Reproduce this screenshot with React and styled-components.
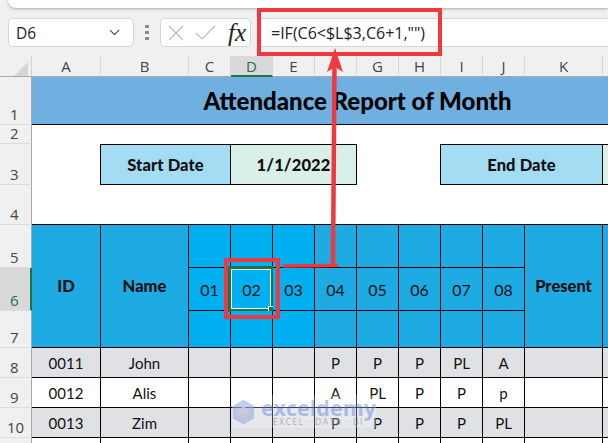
import styled, { createGlobalStyle } from "styled-components";
import { ChevronDown } from "lucide-react";

const columns = ["A", "B", "C", "D", "E", "F", "G", "H", "I", "J", "K", ""];
const days = ["01", "02", "03", "04", "05", "06", "07", "08"];
const rowLabels = ["1", "2", "3", "4", "5", "6", "7", "8", "9", "10", ""];
const students = [
  { id: "0011", name: "John", marks: ["", "", "", "P", "P", "P", "PL", "A"] },
  { id: "0012", name: "Alis", marks: ["", "", "", "A", "PL", "P", "P", "p"] },
  { id: "0013", name: "Zim", marks: ["", "", "", "P", "P", "P", "P", "PL"] },
];

const App = () => {
  return (
    <Page>
      <GlobalStyle />
      <TopPanel />
      <FormulaRow>
        <NameBox>
          D6
          <ChevronDown size={17} strokeWidth={1.5} color="#444" />
        </NameBox>
        <Grip>
          <i />
          <i />
          <i />
        </Grip>
        <FxBox>
          <svg width="16" height="16" viewBox="0 0 16 16">
            <path d="M1 1L15 15M15 1L1 15" stroke="#bdbdbd" strokeWidth="1.2" fill="none" />
          </svg>
          <svg width="21" height="15" viewBox="0 0 21 15">
            <path d="M1 8L7 14L20 1" stroke="#bdbdbd" strokeWidth="1.2" fill="none" />
          </svg>
          <FxLabel>fx</FxLabel>
        </FxBox>
        <FormulaInput>{'=IF(C6<$L$3,C6+1,"")'}</FormulaInput>
      </FormulaRow>

      <Sheet>
        <Corner>
          <svg width="14" height="14" viewBox="0 0 14 14">
            <path d="M14 0V14H0Z" fill="#d6d6d6" />
          </svg>
        </Corner>
        {columns.map((c, i) => (
          <ColHead key={i} $col={i + 2} $active={c === "D"}>{c}</ColHead>
        ))}
        {rowLabels.map((r, i) => (
          <RowHead key={i} $row={i + 2} $wide={r === "10"} $active={r === "6"}>{r}</RowHead>
        ))}

        <Title>Attendance Report of Month</Title>

        <WhiteBand />
        <DateCell $col="3 / span 2" $bg="#a4dcf3">Start Date</DateCell>
        <DateCell $col="5 / span 3" $bg="#d9f0e8" $noLeft>1/1/2022</DateCell>
        <DateCell $col="10 / span 3" $bg="#a4dcf3">End Date</DateCell>
        <DateCell $col="13" $bg="#d9f0e8" $noLeft />

        <Cell $col="2" $row="6 / span 3" $bg="#1eabe3" $bold>ID</Cell>
        <Cell $col="3" $row="6 / span 3" $bg="#1eabe3" $bold>Name</Cell>
        {days.map((d, i) => {
          const bg = i < 3 ? "#00b0f0" : "#1eabe3";
          return [
            <Cell key={d + "a"} $col={i + 4} $row="6" $bg={bg} />,
            <Cell key={d + "b"} $col={i + 4} $row="7" $bg={bg} $day>
              {d}
              {d === "02" && <Selection />}
            </Cell>,
            <Cell key={d + "c"} $col={i + 4} $row="8" $bg={bg} />,
          ];
        })}
        <Cell $col="12" $row="6 / span 3" $bg="#1eabe3" $bold>Present</Cell>
        <Cell $col="13" $row="6 / span 3" $bg="#1eabe3" />

        {students.map((s, r) => {
          const bg = r % 2 === 0 ? "#dfe1e4" : "#fff";
          return [
            <Cell key={s.id} $col="2" $row={r + 9} $bg={bg}>{s.id}</Cell>,
            <Cell key={s.name} $col="3" $row={r + 9} $bg={bg}>{s.name}</Cell>,
            ...s.marks.map((m, i) => (
              <Cell key={s.id + i} $col={i + 4} $row={r + 9} $bg={bg}>{m}</Cell>
            )),
            <Cell key={s.id + "k"} $col="12" $row={r + 9} $bg={bg} />,
            <Cell key={s.id + "l"} $col="13" $row={r + 9} $bg={bg} />,
          ];
        })}
        {columns.map((c, i) => (
          <Cell key={i + "-11"} $col={i + 2} $row="12" $bg="#fff" />
        ))}
      </Sheet>

      <FormulaFrame />
      <CellFrame />
      <Arrow width="70" height="225" viewBox="0 0 70 225">
        <path d="M0 218L55 217.5" stroke="#f0393f" strokeWidth="3.5" fill="none" />
        <path d="M50 219L51.5 15" stroke="#f0393f" strokeWidth="4.5" fill="none" />
        <path d="M52 0L60 24L52 19L44 24Z" fill="#f0393f" />
      </Arrow>

      <Watermark>
        <svg width="28" height="32" viewBox="0 0 28 32">
          <path d="M14 1L27 8.5V23.5L14 31L1 23.5V8.5Z" fill="#8fa6e0" opacity="0.55" />
          <path d="M14 9.5L20.5 13V20L14 24L7.5 20V13Z" fill="#c9ccd6" />
          <path d="M14 17L27 23.5L14 31L1 23.5Z" fill="#b9c2d4" opacity="0.5" />
        </svg>
        <WatermarkText>
          <b>exceldemy</b>
          <span>EXCEL · DATA · BI</span>
        </WatermarkText>
      </Watermark>
    </Page>
  );
};

const GlobalStyle = createGlobalStyle`
  html, body {
    margin: 0;
    padding: 0;
    overflow: hidden;
    background: #f0f0f0;
  }
`;

const Page = styled.div`
  position: relative;
  width: 608px;
  height: 443px;
  overflow: hidden;
  background: #f0f0f0;
  font-family: "Open Sans", "Liberation Sans", sans-serif;
`;

const TopPanel = styled.div`
  height: 8px;
  margin-left: 8px;
  background: #fff;
  border-bottom-left-radius: 8px;
  box-shadow: 0 1px 3px rgba(0, 0, 0, 0.3);
`;

const FormulaRow = styled.div`
  height: 48px;
  display: flex;
  align-items: flex-start;
  padding: 10px 0 0 8px;
  box-sizing: border-box;
`;

const NameBox = styled.div`
  width: 126px;
  height: 29px;
  box-sizing: border-box;
  padding: 0 10px 0 7px;
  display: flex;
  align-items: center;
  justify-content: space-between;
  background: #fff;
  border: 1px solid #d6d6d6;
  border-radius: 5px;
  font-size: 15.5px;
  color: #222;
`;

const Grip = styled.div`
  width: 26px;
  height: 29px;
  display: flex;
  flex-direction: column;
  align-items: center;
  justify-content: center;
  gap: 3px;

  i {
    width: 4px;
    height: 3px;
    background: #8c8c8c;
  }
`;

const FxBox = styled.div`
  width: 91px;
  height: 29px;
  box-sizing: border-box;
  padding: 0 4px 0 7px;
  display: flex;
  align-items: center;
  gap: 11px;
  background: #fff;
  border: 1px solid #d6d6d6;
  border-radius: 5px;
`;

const FxLabel = styled.span`
  margin-left: 1px;
  font-family: "Liberation Serif", serif;
  font-style: italic;
  font-size: 25px;
  line-height: 1;
  color: #222;
`;

const FormulaInput = styled.div`
  flex: 1;
  height: 29px;
  margin-left: 8px;
  box-sizing: border-box;
  padding-left: 12px;
  display: flex;
  align-items: center;
  background: #fff;
  border-top: 1px solid #d6d6d6;
  border-bottom: 1px solid #d6d6d6;
  font-size: 16px;
  color: #222;
`;

const Sheet = styled.div`
  display: grid;
  width: 683px;
  grid-template-columns: 32px 69px 88px repeat(8, 42px) 78px 80px;
  grid-template-rows: 21px 48px 19px 41px 40px 43px 43px 37px 30px 30px 30px 30px;
  font-family: "Lato", "Liberation Sans", sans-serif;
  color: #111;
`;

const Corner = styled.div`
  grid-column: 1;
  grid-row: 1;
  padding: 4px 0 0 14px;
  box-sizing: border-box;
  border-right: 1px solid #d2d2d2;
  border-bottom: 1px solid #a8a8a8;
`;

const ColHead = styled.div`
  grid-column: ${(p) => p.$col};
  grid-row: 1;
  box-sizing: border-box;
  display: flex;
  align-items: center;
  justify-content: center;
  font-family: "Open Sans", sans-serif;
  font-size: 15px;
  color: ${(p) => (p.$active ? "#217346" : "#444")};
  background: ${(p) => (p.$active ? "#d9d9d9" : "transparent")};
  border-right: 1px solid #d8d8d8;
  border-bottom: ${(p) => (p.$active ? "2px solid #217346" : "1px solid #a8a8a8")};
`;

const RowHead = styled.div`
  grid-column: 1;
  grid-row: ${(p) => p.$row};
  box-sizing: border-box;
  padding-left: ${(p) => (p.$wide ? 7 : 10)}px;
  display: flex;
  align-items: flex-end;
  font-family: "Open Sans", sans-serif;
  font-size: 15px;
  line-height: 20px;
  color: ${(p) => (p.$active ? "#217346" : "#444")};
  background: ${(p) => (p.$active ? "#d9d9d9" : "transparent")};
  border-right: ${(p) => (p.$active ? "2px solid #217346" : "1px solid #a8a8a8")};
  border-bottom: 1px solid #dcdcdc;
`;

const Title = styled.div`
  grid-column: 2 / span 12;
  grid-row: 2;
  display: flex;
  align-items: center;
  justify-content: center;
  background: #70b0e0;
  border-bottom: 1px solid #000;
  font-size: 24px;
  font-weight: 900;
  color: #000;
`;

const WhiteBand = styled.div`
  grid-column: 2 / span 12;
  grid-row: 3 / span 3;
  background: #fff;
  border-bottom: 1px solid #000;
`;

const DateCell = styled.div`
  grid-column: ${(p) => p.$col};
  grid-row: 4;
  margin-left: ${(p) => (p.$noLeft ? 0 : -1)}px;
  box-sizing: border-box;
  display: flex;
  align-items: center;
  justify-content: center;
  background: ${(p) => p.$bg};
  border: 1px solid #000;
  border-left: ${(p) => (p.$noLeft ? "none" : "1px solid #000")};
  font-size: 16.5px;
  font-weight: 900;
  letter-spacing: 0.1px;
`;

const Cell = styled.div`
  position: relative;
  grid-column: ${(p) => p.$col};
  grid-row: ${(p) => p.$row};
  box-sizing: border-box;
  display: flex;
  align-items: center;
  justify-content: center;
  background: ${(p) => p.$bg};
  border-right: 1px solid #000;
  border-bottom: 1px solid #000;
  font-size: ${(p) => (p.$bold ? 16.5 : p.$day ? 16 : 15)}px;
  font-weight: ${(p) => (p.$bold ? 900 : 400)};
`;

const Selection = styled.div`
  position: absolute;
  left: -3px;
  top: -2px;
  width: 46px;
  height: 46px;
  box-sizing: border-box;
  border: 3px solid #217346;
  outline: 1px solid #fff;
  outline-offset: -4px;

  &::after {
    content: "";
    position: absolute;
    right: -4px;
    bottom: -4px;
    width: 5px;
    height: 5px;
    background: #217346;
    border: 1px solid #fff;
  }
`;

const FormulaFrame = styled.div`
  position: absolute;
  left: 257px;
  top: 8px;
  width: 185px;
  height: 48px;
  box-sizing: border-box;
  border: 4px solid #f0393f;
`;

const CellFrame = styled.div`
  position: absolute;
  left: 224px;
  top: 258px;
  width: 56px;
  height: 61px;
  box-sizing: border-box;
  border: 4px solid #f0393f;
`;

const Arrow = styled.svg`
  position: absolute;
  left: 283px;
  top: 48px;
`;

const Watermark = styled.div`
  position: absolute;
  left: 232px;
  top: 395px;
  width: 144px;
  height: 33px;
  display: flex;
  align-items: center;
  gap: 6px;
  background: rgba(255, 255, 255, 0.25);
`;

const WatermarkText = styled.div`
  display: flex;
  flex-direction: column;
  align-items: center;
  color: rgba(70, 105, 215, 0.38);
  font-family: "Open Sans", sans-serif;
  line-height: 1;

  b {
    font-size: 21.5px;
    line-height: 21px;
  }

  span {
    font-size: 8.5px;
    letter-spacing: 1.4px;
    color: rgba(110, 110, 110, 0.5);
  }
`;

export default App;
